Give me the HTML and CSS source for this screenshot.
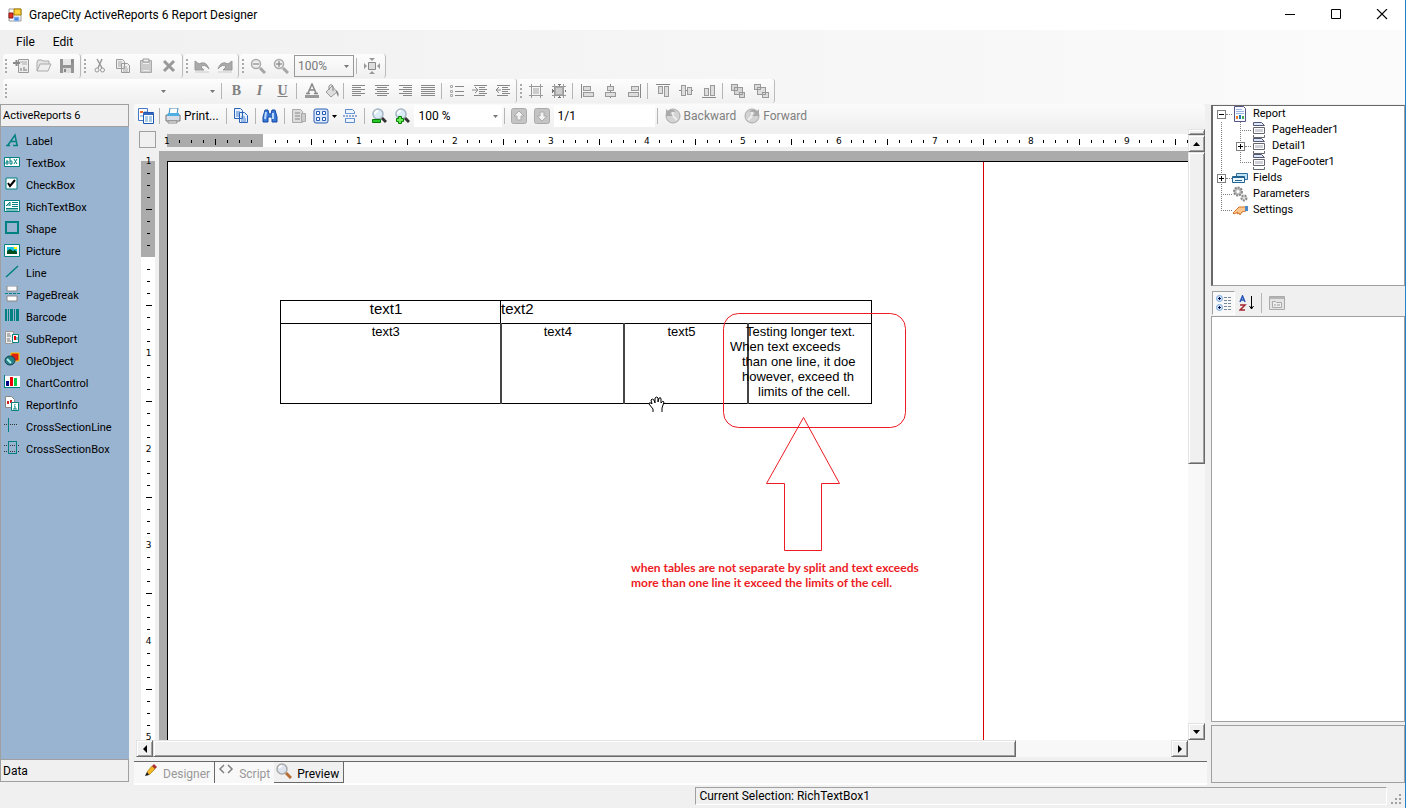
FILE: index.html
```html
<!DOCTYPE html>
<html lang="en">
<head>
<meta charset="utf-8">
<title>GrapeCity ActiveReports 6 Report Designer</title>
<link rel="stylesheet" href="styles.css">
</head>
<body>
<svg class="defs" aria-hidden="true">
  <symbol id="page-section" viewBox="0 0 16 16"><path d="M2.500 3.500v-3h8l3 3z" fill="#dbe8fb" stroke="#555570"/><path d="M2.500 5.500h11v6h-11z" fill="#fff" stroke="#66666e"/><path d="M4 8.500h8" stroke="#d0d0dc" stroke-width="3"/><path d="M2.500 13v2.500h11V13" fill="#fff" stroke="#66666e"/></symbol>
  <symbol id="doc" viewBox="0 0 16 16"><path d="M1.500 1.500h6l2 2v7h-8zM6.500 5.500h6l2 2v7h-8z" fill="#eee" stroke="#999"/><path d="M3 4h4M3 6h3M3 8h3M8 9h4M8 11h5M8 13h5" stroke="#aaa"/></symbol>
  <symbol id="zoom" viewBox="0 0 16 16"><circle cx="6" cy="6" r="4.500" fill="#eee" stroke="#aaa" stroke-width="1.500"/><path d="m10 10 5 5" stroke="#a5a5a5" stroke-width="3"/></symbol>
  <symbol id="lens" viewBox="0 0 16 16"><circle cx="7" cy="6" r="5" fill="#dcecf7" stroke="#a5b5c5" stroke-width="1.500"/><path d="M4 6q0-3 3-3" stroke="#fff" fill="none" stroke-width="2"/><path d="m11 10 4 4" stroke="#333" stroke-width="3"/></symbol>
</svg>

<header class="titlebar">
  <svg class="app-icon" viewBox="0 0 15 15"><path d="M1 1h12v12H1z" fill="#fff" stroke="#999"/><path d="M6 1h7v6H6z" fill="#ffd13b" stroke="#a77c00"/><path d="M1 5h4v5H1z" fill="#e33223" stroke="#8b1710"/><path d="M6 9h5v4H6z" fill="#4f8ce8" stroke="#a8c5ef"/></svg>
  <h1>GrapeCity ActiveReports 6 Report Designer</h1>
  <div class="window-buttons">
    <button aria-label="Minimize"><svg viewBox="0 0 12 12"><path d="M1 5.500h10" stroke="#000"/></svg></button>
    <button aria-label="Maximize"><svg viewBox="0 0 12 12"><path d="M1.500.500h9v9h-9z" fill="none" stroke="#000"/></svg></button>
    <button aria-label="Close"><svg viewBox="0 0 12 12"><path d="m1 0 10 10M11 0 1 10" stroke="#000" stroke-width="1.100"/></svg></button>
  </div>
</header>

<nav class="menubar"><button>File</button><button>Edit</button></nav>

<div class="toolbars">
  <div class="tool-row">
    <div class="tool-group">
      <button class="tool" aria-label="New"><svg viewBox="0 0 16 16"><path d="M5.500 1.500h10v13h-10z" fill="#eee" stroke="#999"/><path d="M7 4h7M9 6h5" stroke="#aaa"/><path d="M0 5h7M3.500 2v6" stroke="#888" stroke-width="2"/><path d="M8 13v-3M11 13V9M13 13v-2" stroke="#999" stroke-width="1.500"/></svg></button>
      <button class="tool" aria-label="Open"><svg viewBox="0 0 16 16"><path d="M1 13V4l1-2h4l1 1h6v3" fill="#e4e4e4" stroke="#aaa"/><path d="m1 13 3-7h11l-3 7z" fill="#eee" stroke="#aaa"/></svg></button>
      <button class="tool" aria-label="Save"><svg viewBox="0 0 16 16"><path d="M1 1h14v14H1z" fill="#959595"/><path d="M4 1h8v6H4z" fill="#e9e9e9"/><path d="M4 10h8v5H4z" fill="#ddd"/><path d="M6 11v3M13 2v3" stroke="#888" stroke-width="2"/></svg></button>
    </div>
    <div class="tool-group">
      <button class="tool" aria-label="Cut"><svg viewBox="0 0 16 16" fill="none" stroke="#999"><path d="m5 1 5 9M10 1 6 10" stroke-width="1.500"/><circle cx="5" cy="12" r="2"/><circle cx="10.500" cy="12" r="2"/></svg></button>
      <button class="tool" aria-label="Copy"><svg><use href="#doc"/></svg></button>
      <button class="tool" aria-label="Paste"><svg viewBox="0 0 16 16"><path d="M2.500 2.500h11v12h-11z" fill="#ccc" stroke="#aaa"/><path d="M5 1h6v3H5z" fill="#eee" stroke="#999"/><path d="M5 5h6v8H5z" fill="#eee"/><path d="M5 7h6M5 9h6M5 11h6" stroke="#aaa"/></svg></button>
      <button class="tool" aria-label="Delete"><svg viewBox="0 0 16 16"><path d="m3 3 10 10M13 3 3 13" stroke="#999" stroke-width="3"/></svg></button>
    </div>
    <div class="tool-group">
      <button class="tool" aria-label="Undo"><svg viewBox="0 0 16 16"><path d="M1 3v9h9L7 9q3-4 8 2Q12 2 5 6L1 3z" fill="#aaa" stroke="#999"/><path d="M1 14h14" stroke="#ccc"/></svg></button>
      <button class="tool" aria-label="Redo"><svg viewBox="0 0 16 16"><path d="M15 3v9H6l3-3Q6 5 1 11 4 2 11 6l4-3z" fill="#aaa" stroke="#999"/><path d="M1 14h14" stroke="#ccc"/></svg></button>
    </div>
    <div class="tool-group">
      <button class="tool" aria-label="Zoom out"><svg viewBox="0 0 16 16"><use href="#zoom"/><path d="M3 6h6" stroke="#777"/></svg></button>
      <button class="tool" aria-label="Zoom in"><svg viewBox="0 0 16 16"><use href="#zoom"/><path d="M3 6h6M6 3v6" stroke="#777"/></svg></button>
      <select class="zoom-select" aria-label="Designer zoom"><option>100%</option></select>
      <i class="sep"></i>
      <button class="tool" aria-label="Fit"><svg viewBox="0 0 16 16"><path d="M4.500 4.500h7v7h-7z" fill="#ddd" stroke="#888"/><path d="M5 0h6L8 3zM5 16h6l-3-3zM0 5v6l3-3zM16 5v6l-3-3z" fill="#999"/></svg></button>
    </div>
  </div>
  <div class="tool-row">
    <div class="tool-group">
      <select class="faint-select font-name" aria-label="Font"><option></option></select>
      <select class="faint-select" aria-label="Font size"><option></option></select>
      <i class="sep"></i>
      <button class="tool letter">B</button>
      <button class="tool letter"><em>I</em></button>
      <button class="tool letter"><u>U</u></button>
      <i class="sep"></i>
      <button class="tool" aria-label="Text color"><svg viewBox="0 0 16 16"><path d="M4 10 8 1l4 9M5.500 7h5M2 10.500h4M10 10.500h4" fill="none" stroke="#888" stroke-width="1.500"/><path d="M1 12h14v3H1z" fill="#999"/></svg></button>
      <button class="tool narrow" aria-label="Fill color"><svg viewBox="0 0 16 16"><path d="m2 9 6-6 5 6-6 5z" fill="#ddd" stroke="#999"/><path d="M5 7V3q2-3 4 0v5" fill="none" stroke="#888"/><path d="M12 7q4 3 2 7l-2-5z" fill="#888"/></svg></button>
      <i class="sep"></i>
      <button class="tool" aria-label="Align left"><svg class="crisp" viewBox="0 0 16 16"><path d="M1 2.500h13M1 4.500h9M1 6.500h13M1 8.500h9M1 10.500h13M1 12.500h9" stroke="#888"/></svg></button>
      <button class="tool" aria-label="Align center"><svg class="crisp" viewBox="0 0 16 16"><path d="M1 2.500h14M3 4.500h10M1 6.500h14M3 8.500h10M1 10.500h14M3 12.500h10" stroke="#888"/></svg></button>
      <button class="tool" aria-label="Align right"><svg class="crisp" viewBox="0 0 16 16"><path d="M2 2.500h13M6 4.500h9M2 6.500h13M6 8.500h9M2 10.500h13M6 12.500h9" stroke="#888"/></svg></button>
      <button class="tool" aria-label="Justify"><svg class="crisp" viewBox="0 0 16 16"><path d="M1 2.500h14M1 4.500h14M1 6.500h14M1 8.500h14M1 10.500h14M1 12.500h14" stroke="#888"/></svg></button>
      <i class="sep"></i>
      <button class="tool" aria-label="Bullets"><svg viewBox="0 0 16 16"><path d="M6 3.500h9M6 8.500h9M6 12.500h9" stroke="#888"/><path d="M1.500 2.500h2v2h-2zM1.500 7.500h2v2h-2zM1.500 11.500h2v2h-2z" fill="none" stroke="#aaa"/></svg></button>
      <button class="tool" aria-label="Indent"><svg viewBox="0 0 16 16"><path d="M2 2.500h13M7 4.500h6M7 6.500h8M7 8.500h6M7 10.500h8M2 12.500h11" stroke="#888"/><path d="M0 7h5M3 4l3 3-3 3" fill="none" stroke="#888"/></svg></button>
      <button class="tool" aria-label="Outdent"><svg viewBox="0 0 16 16"><path d="M2 2.500h13M7 4.500h6M7 6.500h8M7 8.500h6M7 10.500h8M2 12.500h11" stroke="#888"/><path d="M1 7h5M4 4 1 7l3 3" fill="none" stroke="#888"/></svg></button>
    </div>
    <div class="tool-group">
      <button class="tool" aria-label="Snap to grid"><svg class="crisp" viewBox="0 0 16 16"><path d="M5 5h6v6H5z" fill="#ccc"/><path d="M1 3.500h14M1 12.500h14M3.500 1v14M12.500 1v14" stroke="#999"/></svg></button>
      <button class="tool" aria-label="Size to grid"><svg class="crisp" viewBox="0 0 16 16"><path d="M1 3.500h14M1 12.500h14M3.500 1v14M12.500 1v14" stroke="#999"/><path d="M4.500 4.500h7v7h-7z" fill="#ccc" stroke="#aaa"/><path d="M6 1h4L8 3zM6 15h4l-2-2zM1 6v4l2-2zM15 6v4l-2-2z" fill="#777"/></svg></button>
      <i class="sep"></i>
      <button class="tool" aria-label="Align lefts"><svg class="crisp" viewBox="0 0 16 16"><path d="M1.500 1v14" stroke="#888"/><path d="M3.500 3.500h7v4h-7zM3.500 9.500h10v4h-10z" fill="#ddd" stroke="#999"/></svg></button>
      <button class="tool" aria-label="Align centers"><svg class="crisp" viewBox="0 0 16 16"><path d="M7.500 1v14" stroke="#888"/><path d="M4.500 3.500h6v4h-6zM2.500 9.500h10v4h-10z" fill="#ddd" stroke="#999"/></svg></button>
      <button class="tool" aria-label="Align rights"><svg class="crisp" viewBox="0 0 16 16"><path d="M14.500 1v14" stroke="#888"/><path d="M5.500 3.500h7v4h-7zM2.500 9.500h10v4h-10z" fill="#ddd" stroke="#999"/></svg></button>
      <i class="sep"></i>
      <button class="tool" aria-label="Align tops"><svg class="crisp" viewBox="0 0 16 16"><path d="M1 1.500h14" stroke="#888"/><path d="M3.500 3.500h4v7h-4zM9.500 3.500h4v10h-4z" fill="#ddd" stroke="#999"/></svg></button>
      <button class="tool" aria-label="Align middles"><svg class="crisp" viewBox="0 0 16 16"><path d="M1 7.500h14" stroke="#888"/><path d="M3.500 2.500h4v10h-4zM9.500 4.500h4v7h-4z" fill="#ddd" stroke="#999"/></svg></button>
      <button class="tool" aria-label="Align bottoms"><svg class="crisp" viewBox="0 0 16 16"><path d="M1 14.500h14" stroke="#888"/><path d="M3.500 5.500h4v7h-4zM9.500 2.500h4v10h-4z" fill="#ddd" stroke="#999"/></svg></button>
      <i class="sep"></i>
      <button class="tool" aria-label="Bring to front"><svg class="crisp" viewBox="0 0 16 16"><path d="M1.500 1.500h6v6h-6zM9.500 9.500h5v5h-5zM4.500 4.500h8v7h-8z" fill="#d6d6d6" stroke="#999"/></svg></button>
      <button class="tool" aria-label="Send to back"><svg class="crisp" viewBox="0 0 16 16"><path d="M4.500 4.500h8v7h-8zM1.500 1.500h6v5h-6zM9.500 9.500h6v5h-6z" fill="#ddd" stroke="#999"/></svg></button>
    </div>
  </div>
</div>

<main class="body">
  <aside class="toolbox">
    <h2>ActiveReports 6</h2>
    <ul>
      <li><svg viewBox="0 0 16 16"><path d="M2 13.500h4M9 13.500h5M4 13 11 3l2 10M6.500 9.500H12" stroke="#008080" fill="none" stroke-width="1.500"/></svg>Label</li>
      <li><svg viewBox="0 0 16 16"><path d="M.500 3.500h15v9H.500z" fill="#fff" stroke="#008080"/><path d="M2 7h2v3H2v-2h2M6 4v6h2V7H6M10 5l3 5M13 5l-3 5" stroke="#008080" fill="none"/></svg>TextBox</li>
      <li><svg viewBox="0 0 16 16"><path d="M2 2h11v11H2z" fill="#fff" stroke="#008080"/><path d="m4 7 2 3 5-6" stroke="#000" stroke-width="2" fill="none"/></svg>CheckBox</li>
      <li><svg viewBox="0 0 16 16"><path d="M.500 2.500h15v11H.500z" fill="#fff" stroke="#008080"/><path d="m2 8 4-4v4M3 7h3M8 4.500h6M8 6.500h6M8 8.500h6M2 10.500h12M2 12h12" stroke="#008080" fill="none"/></svg>RichTextBox</li>
      <li><svg viewBox="0 0 16 16"><path d="M2 2h12v11H2z" fill="none" stroke="#008080" stroke-width="2"/></svg>Shape</li>
      <li><svg viewBox="0 0 16 16"><path d="M.500 2.500h15v12H.500z" fill="#fff" stroke="#008080"/><path d="M3 5h10v7H3z" fill="#19c3e0"/><path d="m3 12 0-3 3-2 3 2 2-1 2 2v2z" fill="#004d20"/><path d="M10 5h3v2h-3z" fill="#ff0"/></svg>Picture</li>
      <li><svg viewBox="0 0 16 16"><path d="M2 13 14 2" stroke="#008080" stroke-width="1.500"/></svg>Line</li>
      <li><svg viewBox="0 0 16 16"><path d="M3 0h10v5H3zM3 10h10v5H3z" fill="#fff" stroke="#888"/><path d="M1 7.500h15" stroke="#008080" stroke-dasharray="3 1"/></svg>PageBreak</li>
      <li><svg class="crisp" viewBox="0 0 16 16"><path d="M1 1h2v12H1zM4 1h1v12H4zM6 1h3v12H6zM10 1h1v12h-1zM12 1h3v12h-3z" fill="#008080"/></svg>Barcode</li>
      <li><svg viewBox="0 0 16 16"><path d="M1.500 1.500h8v12h-8z" fill="#eee" stroke="#999"/><path d="M3 4h3M3 6h4M3 9h3M3 11h4" stroke="#777"/><path d="M8.500 4.500h6v8h-6z" fill="#fff" stroke="#008080"/><path d="M11 6v4" stroke="#d00" stroke-width="2"/><path d="M13 7v3" stroke="#008080"/></svg>SubReport</li>
      <li><svg viewBox="0 0 16 16"><path d="M7 1h8v8H7z" fill="#d21" stroke="#fc0"/><ellipse cx="6" cy="8.500" rx="5" ry="4.500" fill="#287f83" stroke="#145"/><path d="m3 7 4 4" stroke="#aee" stroke-width="2"/></svg>OleObject</li>
      <li><svg class="crisp" viewBox="0 0 16 16"><path d="M1 2h15v11H1z" fill="#fff"/><path d="M.500 1v12.500H16" fill="none" stroke="#008080"/><path d="M2 7h3v5H2z" fill="#008"/><path d="M6 3h3v9H6z" fill="#e00"/><path d="M10 4h3v8h-3z" fill="#0c4"/></svg>ChartControl</li>
      <li><svg viewBox="0 0 16 16"><path d="M1.500.500h6l3 3v8h-9z" fill="#fff" stroke="#888"/><path d="M3 5h2v3H3zM6 4h2v3H6z" fill="#c22"/><path d="M7.500 6.500h7v8h-7z" fill="#fff" stroke="#008080"/><path d="M11 8v1M10 10h1v3M9 13h4" stroke="#008080" fill="none"/></svg>ReportInfo</li>
      <li><svg class="crisp" viewBox="0 0 16 16"><path d="M0 6.500h14" stroke="#333" stroke-dasharray="1 1"/><path d="M4.500 0v14" stroke="#008080"/></svg>CrossSectionLine</li>
      <li><svg class="crisp" viewBox="0 0 16 16"><path d="M0 5.500h16M0 11.500h16" stroke="#333" stroke-dasharray="1 1"/><path d="M4.500 1.500h8v12h-8z" fill="none" stroke="#008080"/></svg>CrossSectionBox</li>
    </ul>
    <button class="data-tab">Data</button>
  </aside>

  <section class="center">
    <div class="viewer-bar">
      <button class="tool" aria-label="Table of contents"><svg viewBox="0 0 16 16"><path d="M.500.500h9v12h-9z" fill="#fff" stroke="#4a78c4"/><path d="M2 3h3v2H2z" fill="#e62"/><path d="M6 4h3M2 8h3" stroke="#69c"/><path d="M5.500 4.500h10v11h-10z" fill="#fff" stroke="#1f58b0"/><path d="M5 5h11v2H5z" fill="#3468bf"/><path d="M7 9h3M7 11h3M7 13h3M11 9h3M11 11h3M11 13h3" stroke="#59c"/></svg></button>
      <i class="sep"></i>
      <button class="with-text print"><svg viewBox="0 0 16 16"><path d="M4 6 5 0h8l-1 6z" fill="#fff" stroke="#48b"/><path d="M1 7h14v6H1z" fill="#d8dde5" stroke="#777"/><path d="M3 5h11v3H2z" fill="#4eaee5"/><path d="M3 13h9v2H3z" fill="#fff" stroke="#888"/></svg>Print...</button>
      <i class="sep"></i>
      <button class="tool" aria-label="Copy page"><svg viewBox="0 0 16 16"><path d="M1.500.500h6l2 2v8h-8zM6.500 4.500h5l3 3v7h-8z" fill="#e7f1ff" stroke="#2b63bb"/><path d="M3 4h4M3 6h3M3 8h3M8 9h4M8 11h5M8 13h5" stroke="#4b83cb"/></svg></button>
      <i class="sep"></i>
      <button class="tool" aria-label="Find"><svg viewBox="0 0 16 16"><path d="M3 2h3l1 4h2l1-4h3l2 7v5h-5V9H6v5H1V9z" fill="#3979d6" stroke="#1549a3"/><path d="M4 4 3 11M11 5v6" stroke="#bcd7fb" stroke-width="2"/></svg></button>
      <i class="sep"></i>
      <button class="tool" aria-label="Single page"><svg viewBox="0 0 16 16"><path d="M1.500 1.500h8l2 2v11h-10z" fill="#ddd" stroke="#aaa"/><path d="M4 5h5M4 8h5M4 11h5" stroke="#888"/><path d="M10.500 5.500h4v8h-4z" fill="#ccc" stroke="#aaa"/></svg></button>
      <button class="with-text multi" aria-label="Multiple pages"><svg viewBox="0 0 16 16"><rect x="1" y="1" width="14" height="14" rx="2" fill="#dce9fa" stroke="#2a5db5"/><path d="M3.500 3.500h3v3h-3zM9.500 3.500h3v3h-3zM3.500 9.500h3v3h-3zM9.500 9.500h3v3h-3z" fill="#fff" stroke="#2a5db5"/></svg><svg class="caret" viewBox="0 0 5 3"><path d="M0 0h5L2.500 3z"/></svg></button>
      <button class="tool" aria-label="Continuous"><svg viewBox="0 0 16 16"><path d="M3.500 5V1.500h7l2 2V5M3.500 11v3.500h9V11" fill="#eef5ff" stroke="#5b8bcb"/><path d="M3 5.500h10M3 10.500h10" stroke="#6b9bdb"/><path d="M1 8h15" stroke="#2a5db5" stroke-dasharray="2 1"/></svg></button>
      <i class="sep"></i>
      <button class="tool" aria-label="Zoom out"><svg viewBox="0 0 16 16"><use href="#lens"/><path d="M1.500 11.500h8v3h-8z" fill="#29c829" stroke="#087808"/></svg></button>
      <button class="tool" aria-label="Zoom in"><svg viewBox="0 0 16 16"><use href="#lens"/><path d="M4.500 8.500h3v2h2v3h-2v2h-3v-2h-2v-3h2z" fill="#63ed52" stroke="#087808"/></svg></button>
      <select class="page-zoom" aria-label="Preview zoom"><option>100 %</option></select>
      <i class="sep"></i>
      <button class="tool" aria-label="Previous page"><svg viewBox="0 0 16 16"><rect x=".500" y=".500" width="15" height="15" rx="2" fill="#c4c4c4" stroke="#aaa"/><path d="m8 3 5 5h-3v4H6V8H3z" fill="#f2f2f2" stroke="#aaa"/></svg></button>
      <button class="tool" aria-label="Next page"><svg viewBox="0 0 16 16"><rect x=".500" y=".500" width="15" height="15" rx="2" fill="#c4c4c4" stroke="#aaa"/><path d="m8 13 5-5h-3V4H6v4H3z" fill="#f2f2f2" stroke="#aaa"/></svg></button>
      <input class="page-number" aria-label="Page" value="1/1">
      <i class="sep"></i>
      <button class="with-text muted"><svg viewBox="0 0 16 16"><circle cx="8" cy="8" r="7" fill="#d3d3d3" stroke="#aaa"/><path d="M8 8V4M8 8l4 4" stroke="#eee" stroke-width="2"/><path d="M1 1v7h7L5 5q3-2 6-1Q8 0 3 3z" fill="#aaa"/></svg>Backward</button>
      <button class="with-text muted"><svg viewBox="0 0 16 16"><circle cx="8" cy="8" r="7" fill="#d3d3d3" stroke="#aaa"/><path d="M8 8V4M8 8l-4 4" stroke="#eee" stroke-width="2"/><path d="M15 1v7H8l3-3Q8 3 5 4q3-4 8-1z" fill="#aaa"/></svg>Forward</button>
    </div>

    <div class="viewer">
      <div class="corner"><span></span></div>
      <div class="ruler-h"><span class="unit gray"><b>1</b></span><span class="unit"></span><span class="unit"><b>1</b></span><span class="unit"><b>2</b></span><span class="unit"><b>3</b></span><span class="unit"><b>4</b></span><span class="unit"><b>5</b></span><span class="unit"><b>6</b></span><span class="unit"><b>7</b></span><span class="unit"><b>8</b></span><span class="unit"><b>9</b></span><span class="unit"></span></div>
      <div class="ruler-v"><div class="ruler-v-track"><span class="unit gray"><b>1</b></span><span class="unit"></span><span class="unit"><b>1</b></span><span class="unit"><b>2</b></span><span class="unit"><b>3</b></span><span class="unit"><b>4</b></span><span class="unit"><b>5</b></span></div></div>
      <div class="viewport">
        <div class="sheet">
          <div class="paper">
            <table class="report">
              <colgroup><col class="wide"><col><col><col></colgroup>
              <tr class="head"><td>text1</td><td colspan="3" class="left">text2</td></tr>
              <tr class="cells"><td>text3</td><td>text4</td><td>text5</td><td></td></tr>
            </table>
            <div class="overflow-text"><p>Testing longer text.</p><p>When text exceeds</p><p>than one line, it doe</p><p>however, exceed th</p><p>limits of the cell.</p></div>
            <svg class="callout" viewBox="0 0 184 240"><rect x=".500" y=".500" width="182" height="114" rx="15"/><path d="m80.500 104.500 36 66h-18v67h-37v-67h-18z"/></svg>
            <p class="note">when tables are not separate by split and text exceeds<br>more than one line it exceed the limits of the cell.</p>
            <svg class="hand" viewBox="0 0 17 17"><path d="M5 16v-3L1 8q0-2 2-1l1 1-1-4q1-2 3 0l1 3V2q2-2 3 0v4l1-4q2-1 2 1v4q2-3 3-1l-2 6v4" fill="#fff" stroke="#000"/></svg>
          </div>
        </div>
      </div>
      <div class="scroll-v"><span class="split"></span><button aria-label="Scroll up"><svg viewBox="0 0 8 8"><path d="M0 6h7L3.500 2z"/></svg></button><span class="thumb"></span><span class="track"></span><button aria-label="Scroll down"><svg viewBox="0 0 8 8"><path d="M0 2h7L3.500 6z"/></svg></button></div>
      <div class="scroll-h"><button aria-label="Scroll left"><svg viewBox="0 0 8 8"><path d="M6 0v8L2 4z"/></svg></button><span class="thumb"></span><span class="track"></span><button aria-label="Scroll right"><svg viewBox="0 0 8 8"><path d="M2 0v8l4-4z"/></svg></button></div>
    </div>

    <div class="tabs">
      <button><svg viewBox="0 0 16 16"><path d="m5 9 5-6 3 3-6 6z" fill="#f5b81f" stroke="#a87a20" stroke-width=".7"/><path d="m10 3 2-2 3 3-2 2z" fill="#a33"/><path d="m5 9 2 3-4 1z" fill="#111"/></svg>Designer</button>
      <button class="script"><svg viewBox="0 0 16 16"><path d="M6 2 2 6l4 4M10 2l4 4-4 4" fill="none" stroke="#808080" stroke-width="1.500"/></svg>Script</button>
      <button class="active"><svg viewBox="0 0 16 16"><circle cx="6" cy="6" r="5" fill="#dde4ed" stroke="#aaa" stroke-width="1.500"/><path d="M3 5q1-2 3-2" stroke="#fff" fill="none" stroke-width="2"/><path d="m10 10 5 5" stroke="#b76c36" stroke-width="3"/></svg>Preview</button>
    </div>
  </section>

  <aside class="inspector">
    <div class="tree">
      <div class="row"><i class="expander minus"></i><i class="dots"></i><svg viewBox="0 0 16 16"><path d="M2.500.500h9l2 2v13h-11z" fill="#f8faff" stroke="#555588"/><path d="M4 3.500h6M4 5.500h8M4 7.500h8" stroke="#9ab5e5"/><path d="M4 10h2v3H4z" fill="#e72"/><path d="M7 9h2v4H7z" fill="#27b"/><path d="M10 10h2v3h-2z" fill="#4a5"/></svg>Report</div>
      <div class="branch">
        <div class="row child"><i class="dots"></i><svg><use href="#page-section"/></svg>PageHeader1</div>
        <div class="row child"><i class="expander"></i><i class="dots"></i><svg><use href="#page-section"/></svg>Detail1</div>
        <div class="row last"><i class="dots"></i><svg><use href="#page-section"/></svg>PageFooter1</div>
      </div>
      <div class="row line"><i class="expander"></i><i class="dots"></i><svg viewBox="0 0 16 16"><path d="M4.500 3.500h11v6h-11z" fill="#bde1f5" stroke="#356b99"/><path d="M.500 6.500h12v6H.500z" fill="#eaf7ff" stroke="#246292"/><path d="M1 7.500h11M3 10.500h7" stroke="#246292"/></svg>Fields</div>
      <div class="row line"><i class="dots"></i><svg viewBox="0 0 16 16"><circle cx="6" cy="5.500" r="4" fill="#bbb" stroke="#888" stroke-width="2" stroke-dasharray="2 1"/><circle cx="6" cy="5.500" r="1.500" fill="#fff"/><circle cx="12" cy="12" r="2.500" fill="#ddd" stroke="#888" stroke-width="2" stroke-dasharray="2 1"/></svg>Parameters</div>
      <div class="row last"><i class="dots"></i><svg viewBox="0 0 16 16"><path d="m1 11 6-6h7v4l-4 1-2 3-1-2-2 1 1-2-4 2z" fill="#ffc68d" stroke="#d37831"/><path d="M13 4h3v5h-3z" fill="#4b89c7"/></svg>Settings</div>
    </div>
    <div class="prop-bar">
      <button class="pressed" aria-label="Categorized"><svg viewBox="0 0 16 16"><circle cx="3.500" cy="3.500" r="3" fill="#cfe3ff" stroke="#7aa7d8"/><circle cx="3.500" cy="12.500" r="3" fill="#cfe3ff" stroke="#7aa7d8"/><path d="M2 3.500h3M3.500 2v3M2 12.500h3M3.500 11v3" stroke="#014"/><path d="M8 2.500h8M8 5.500h8M8 8.500h8M8 11.500h8M8 14.500h8" stroke="#789" stroke-dasharray="3 1"/></svg></button>
      <button aria-label="Alphabetical"><svg viewBox="0 0 16 16"><path d="m1 7 2.500-6L6 7M2 5h3" fill="none" stroke="#2854b8" stroke-width="1.500"/><path d="M1 10h5l-5 5h5" fill="none" stroke="#a32630" stroke-width="1.500"/><path d="M12.500 1v13M10.500 11l2 3 2-3" fill="none" stroke="#000"/></svg></button>
      <i class="sep"></i>
      <button aria-label="Property pages"><svg viewBox="0 0 16 16"><path d="M.500 1.500h15v13H.500z" fill="#e4e4e4" stroke="#aaa"/><path d="M1 3h14" stroke="#b5b5b5" stroke-width="2"/><path d="M3.500 6.500h3l1 1h5v5h-9z" fill="#eee" stroke="#aaa"/><path d="M5 10h2M8 10h3" stroke="#999"/></svg></button>
    </div>
    <div class="prop-grid"></div>
    <div class="prop-help"></div>
  </aside>
</main>

<footer class="status">
  <div class="status-space"></div>
  <div class="status-panel">Current Selection: RichTextBox1</div>
  <svg class="size-grip" viewBox="0 0 12 12"><path d="M9 1h2v2H9zM5 5h2v2H5zM9 5h2v2H9zM1 9h2v2H1zM5 9h2v2H5zM9 9h2v2H9z" fill="#a0a0a0"/></svg>
</footer>
</body>
</html>
```

FILE: styles.css
```css
* { box-sizing: border-box; }
body {
  margin: 0;
  height: 100vh;
  display: flex;
  flex-direction: column;
  overflow: hidden;
  background: #f0f0f0;
  border-right: 1px solid #2680c8;
  color: #000;
  font: 12px/16px Roboto, "Noto Sans", sans-serif;
}
button, select, input { font: inherit; color: inherit; margin: 0; padding: 0; border: 0; background: none; border-radius: 0; }
svg { width: 16px; height: 16px; flex: none; display: block; }
h1, h2, p, ul { margin: 0; padding: 0; font: inherit; }
.defs { position: absolute; width: 0; height: 0; }
.crisp { shape-rendering: crispEdges; }

.titlebar { height: 30px; flex: none; display: flex; align-items: center; gap: 6px; padding-left: 8px; background: #fff; }
.titlebar .app-icon { width: 15px; height: 15px; }
.window-buttons { margin-left: auto; display: flex; }
.window-buttons button { width: 46px; height: 30px; display: flex; align-items: center; justify-content: center; }
.window-buttons svg { width: 12px; height: 12px; }

.menubar { height: 24px; flex: none; display: flex; gap: 2px; padding-left: 8px; background: linear-gradient(90deg, #f0f0f0, #fbfbfb); }
.menubar button { padding: 0 8px; }

/* Designer toolbars */
.toolbars { flex: none; height: 50px; padding-left: 3px; display: flex; flex-direction: column; gap: 1px; background: linear-gradient(90deg, #f0f0f0, #fbfbfb); }
.tool-row { display: flex; gap: 1px; height: 24px; }
.tool-group { display: flex; align-items: center; padding: 0 2px 0 6px; border-right: 1px solid #bbb; border-radius: 3px; background:
  linear-gradient(#aaa, #aaa) 2px 5px / 2px 2px no-repeat,
  linear-gradient(#aaa, #aaa) 2px 9px / 2px 2px no-repeat,
  linear-gradient(#aaa, #aaa) 2px 13px / 2px 2px no-repeat,
  linear-gradient(#aaa, #aaa) 2px 17px / 2px 2px no-repeat,
  linear-gradient(#fdfdfd, #f0f0f0); }
.tool { width: 23px; height: 22px; display: flex; align-items: center; justify-content: center; flex: none; }
.narrow { width: 18px; }
.letter { font: bold 14px/16px "Liberation Serif", serif; color: #808080; }
.sep { width: 1px; height: 16px; margin: 0 3px 0 2px; background: #b5b5b5; flex: none; }
select { appearance: none; background: url("data:image/svg+xml,%3Csvg xmlns='http://www.w3.org/2000/svg' width='5' height='3'%3E%3Cpath d='M0 0h5L2.500 3z' fill='%23777'/%3E%3C/svg%3E") right 4px center / 5px 3px no-repeat; }
.zoom-select { width: 60px; height: 22px; margin-left: 2px; padding-left: 3px; border: 1px solid #999; color: #777; }
.faint-select { width: 49px; height: 20px; }
.font-name { width: 161px; }

.body { flex: 1; min-height: 0; display: flex; }
.toolbox { width: 129px; flex: none; margin-bottom: 4px; display: flex; flex-direction: column; background: #99b4d1; border-left: 1px solid #a0a0a0; }
.toolbox h2, .data-tab { height: 23px; padding: 0 2px; line-height: 20px; text-align: left; background: #f0f0f0; border: 1px solid #a0a0a0; border-left: 0; }
.toolbox h2 { font-size: 11px; line-height: 22px; }
.toolbox ul { flex: 1; list-style: none; padding: 4px 0 0 3px; font-size: 11px; line-height: 22px; }
.toolbox li { display: flex; height: 22px; gap: 6px; align-items: center; }
.toolbox li svg { margin-bottom: 4px; }

/* Preview */
.center { flex: 1; min-width: 0; margin-left: 5px; display: flex; flex-direction: column; }
.viewer-bar { height: 24px; flex: none; display: flex; align-items: center; background: linear-gradient(#fbfbfb, #f0f0f0); border-radius: 3px; margin-right: 2px; }
.with-text { display: flex; align-items: center; gap: 3px; height: 22px; padding: 0 4px; }
.print { padding: 0 5px 0 2px; }
.multi { padding: 0 2px; }
.caret { width: 5px; height: 3px; }
.page-zoom { width: 88px; height: 22px; padding-left: 5px; background-color: #fff; }
.page-number { width: 101px; height: 22px; padding-left: 4px; background: #fff; }
.muted { color: #808080; }

.viewer { flex: 1; min-height: 0; display: grid; grid-template: 23px minmax(0, 1fr) 17px / 25px minmax(0, 1fr) 17px; margin-right: 2px; }
.corner { padding: 3px 0 0 5px; }
.corner span { display: block; width: 17px; height: 17px; border: 1px solid #a0a0a0; }
.ruler-h { display: flex; overflow: hidden; padding: 6px 0 4px 8px; }
.unit b { display: block; font: 9px/15px "DejaVu Sans", sans-serif; }
.ruler-h .unit { flex: none; width: 96px; padding-left: 6px; background:
  linear-gradient(#000, #000) 42px 5px / 1px 6px no-repeat content-box,
  linear-gradient(90deg, #000 1px, transparent 1px) 6px 6px / 12px 3px repeat-x content-box, #fff; background-clip: content-box, content-box, border-box; }
.ruler-h b { width: 6px; margin-left: -9px; }
.ruler-v { overflow: hidden; padding: 10px 4px 0 7px; }
.ruler-v .unit { display: block; height: 96px; padding-top: 6px; background:
  linear-gradient(#000, #000) 5px 42px / 6px 1px no-repeat content-box,
  linear-gradient(#000 1px, transparent 1px) 6px 6px / 3px 12px repeat-y content-box, #fff; background-clip: content-box, content-box, border-box; }
.ruler-v b { width: 15px; text-align: center; transform: translateY(-13px); }
.ruler-h .gray, .ruler-v .gray { background-color: #ababab; }
.viewport { overflow: hidden; padding: 10px 0 0 8px; background: #ababab; }
.sheet { height: 100%; background: #fff; border-top: 1px solid #000; border-left: 1px solid #000; }
.paper { position: relative; width: 816px; height: 100%; border-right: 1px solid #d80000; font-family: "Liberation Sans", Arial, sans-serif; }
.report { position: absolute; left: 112px; top: 138px; width: 592px; table-layout: fixed; border-collapse: collapse; }
.report .wide { width: 220px; }
.report td { padding: 0 9px 0 0; border: 1px solid #000; text-align: center; vertical-align: top; }
.report .head { height: 23px; font-size: 15px; line-height: 16px; }
.report .cells { height: 80px; font-size: 13px; line-height: 16px; }
.report .cells td + td { border-left: 2px solid #444; }
.report .left { padding: 0; text-align: left; }
.overflow-text { position: absolute; left: 562px; top: 162px; width: 128px; overflow: hidden; white-space: nowrap; font-size: 13px; line-height: 15px; }
.overflow-text p { padding-left: 12px; }
.overflow-text p:first-child { padding-left: 16px; }
.overflow-text p:nth-child(2) { padding-left: 0; }
.overflow-text p:last-child { padding-left: 28px; }
.callout { position: absolute; left: 555px; top: 151px; width: 184px; height: 240px; fill: none; stroke: #ed1c24; }
.note { position: absolute; left: 463px; top: 398px; white-space: nowrap; color: #ed1c24; font: bold 12px/15px Lato, sans-serif; }
.hand { position: absolute; left: 480px; top: 234px; width: 17px; height: 17px; }

.scroll-v { grid-area: 1 / 3 / 3 / 4; display: flex; flex-direction: column; padding-top: 1px; }
.scroll-h { grid-area: 3 / 1 / 4 / 3; display: flex; padding-left: 2px; }
.scroll-v button, .scroll-h button, .thumb, .split { flex: none; display: flex; align-items: center; justify-content: center; background: #f0f0f0; border: 1px solid; border-color: #e3e3e3 #696969 #696969 #e3e3e3; box-shadow: inset 1px 1px #fff, inset -1px -1px #a0a0a0; }
.scroll-v button, .scroll-h button { width: 17px; height: 17px; }
.scroll-v svg, .scroll-h svg { width: 8px; height: 8px; }
.split { height: 6px; }
.track { flex: 1; background: #f8f8f8; }
.scroll-v .thumb { height: 51%; }
.scroll-h .thumb { width: 82%; }

.tabs { flex: none; height: 24px; margin: 4px 0 1px; display: flex; background: #f8f8f8; border-top: 1px solid #696969; border-bottom: 2px solid #fff; color: #999; }
.tabs button { display: flex; gap: 5px; padding: 2px 4px 0 8px; line-height: 20px; }
.tabs svg { margin-top: -1px; }
.tabs .script { border-left: 1px solid #696969; padding-left: 3px; }
.tabs .active { padding-left: 2px; background: #f0f0f0; color: #000; border-right: 1px solid #696969; border-bottom: 1px solid #696969; }

/* Report explorer and property grid */
.inspector { width: 194px; flex: none; margin: 1px 0 3px 4px; display: flex; flex-direction: column; }
.tree { height: 181px; flex: none; padding: 0 0 0 4px; background: #fff; border: 1px solid #a0a0a0; border-top-color: #696969; border-left: 2px solid #696969; font-size: 11px; }
.row { display: flex; align-items: center; height: 16px; }
.row svg { margin-right: 5px; }
.expander { width: 9px; height: 9px; flex: none; border: 1px solid #808080; background: linear-gradient(#000, #000) center / 5px 1px no-repeat, linear-gradient(#000, #000) center / 1px 5px no-repeat, #fff; }
.minus { background: linear-gradient(#000, #000) center / 5px 1px no-repeat, #fff; }
.dots { flex: none; width: 6px; border-top: 1px dotted #808080; }
.row > .dots:first-child { width: 11px; margin-left: 4px; }
.branch { background: linear-gradient(#808080 1px, transparent 1px) 4px 0 / 1px 2px repeat-y; }
.branch .row { margin-left: 19px; }
.child, .line { background: linear-gradient(#808080 1px, transparent 1px) 4px 0 / 1px 2px repeat-y; }
.last { background: repeating-linear-gradient(#808080 0 1px, transparent 1px 2px) 4px 0 / 1px 8px no-repeat; }
.prop-bar { height: 30px; flex: none; display: flex; align-items: center; padding: 4px 0 0 1px; }
.prop-bar button { width: 23px; height: 24px; display: flex; align-items: center; justify-content: center; }
.prop-bar .pressed { border: 1px solid #fff; border-top-color: #a0a0a0; border-left-color: #a0a0a0; background: #f8f8f8; }
.prop-bar .sep { height: 20px; margin: 0 3px; }
.prop-grid { flex: 1; background: #fff; border: 1px solid #a0a0a0; }
.prop-help { height: 58px; flex: none; margin-top: 3px; border: 1px solid #a0a0a0; }

.status { height: 22px; flex: none; display: flex; padding: 1px 3px 3px 0; }
.status-space { flex: 0 0 49.6%; }
.status-panel { flex: 1; border: 1px solid #fff; border-top-color: #a0a0a0; border-left-color: #a0a0a0; padding-left: 3px; }
.size-grip { width: 12px; height: 12px; align-self: flex-end; margin-left: 3px; }
```
